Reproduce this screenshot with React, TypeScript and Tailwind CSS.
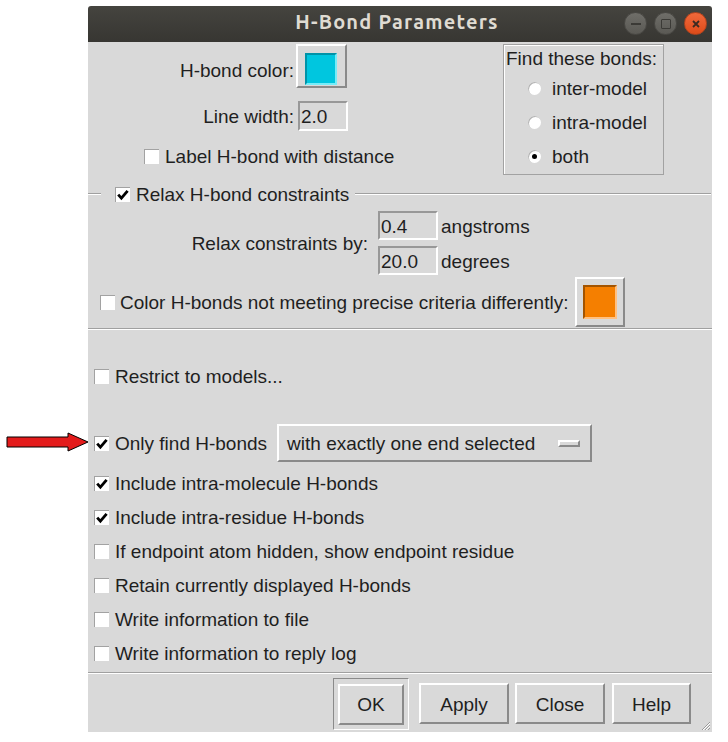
import React from "react";

const RAISED =
  "border-2 border-t-white border-l-white border-r-[#8a8a8a] border-b-[#8a8a8a]";
const SUNKEN =
  "border-2 border-t-[#989898] border-l-[#989898] border-r-white border-b-white";

function T({ children, className = "" }: { children: React.ReactNode; className?: string }) {
  return <span className={`pt-[2px] whitespace-nowrap ${className}`}>{children}</span>;
}

function Check({ checked }: { checked?: boolean }) {
  return (
    <span className="relative inline-block w-[15px] h-[15px] shrink-0 bg-white border-t border-l border-[#a2a2a2]">
      {checked && (
        <svg className="absolute left-0 top-0" width="14" height="14" viewBox="0 0 14 14">
          <path d="M2.2 6.6 L5.4 10.2 L11.6 2.8" fill="none" stroke="#000" strokeWidth="2.8" />
        </svg>
      )}
    </span>
  );
}

function Radio({ on }: { on?: boolean }) {
  return (
    <span className="w-[13px] h-[13px] shrink-0 rounded-full bg-white shadow-[inset_1px_1px_0_#b4b4b4] flex items-center justify-center">
      {on && <span className="w-[5px] h-[5px] rounded-full bg-black" />}
    </span>
  );
}

function Groove() {
  return <div className="h-[2px] border-t border-[#a0a0a0] bg-white" />;
}

function Row({ checked, children }: { checked?: boolean; children: React.ReactNode }) {
  return (
    <div className="h-[34px] flex items-center gap-[6px]">
      <Check checked={checked} />
      <T>{children}</T>
    </div>
  );
}

function Btn({ w, children }: { w: string; children: React.ReactNode }) {
  return (
    <div className={`${w} h-[41px] ${RAISED} bg-[#d9d9d9] flex items-center justify-center`}>
      <T>{children}</T>
    </div>
  );
}

export default function App() {
  return (
    <div className="relative w-[728px] h-[742px] bg-white font-['Liberation_Sans',Arial,sans-serif] text-[19px] leading-[22px] text-[#1f1f1f] overflow-hidden">
      {/* annotation arrow */}
      <svg className="absolute left-0 top-[430px]" width="92" height="26" viewBox="0 0 92 26">
        <polygon
          points="7,7 68,7 68,3 88,12 68,21 68,17 7,17"
          fill="#e31b1b"
          stroke="#000"
          strokeWidth="1"
        />
      </svg>

      <div className="ml-[88px] pt-[6px] w-[624px]">
        {/* title bar */}
        <div className="h-[36px] grid grid-cols-[1fr_auto_1fr] items-center bg-gradient-to-b from-[#45443f] to-[#373632] rounded-t-[3px]">
          <div />
          <div className="pb-[6px] mr-[6px] font-['Ubuntu','Open_Sans',sans-serif] font-bold text-[20px] leading-[27px] text-[#dfdbd2] tracking-[1.2px]">
            H-Bond Parameters
          </div>
          <div className="flex justify-end items-center gap-[7px] pr-[5px] pb-[1px]">
            <span className="w-[23px] h-[23px] rounded-full bg-gradient-to-b from-[#6f6e69] to-[#5a5954] border border-[#4a4945] flex items-center justify-center">
              <span className="w-[10px] h-[2px] bg-[#3b3a36]" />
            </span>
            <span className="w-[23px] h-[23px] rounded-full bg-gradient-to-b from-[#6f6e69] to-[#5a5954] border border-[#4a4945] flex items-center justify-center">
              <span className="w-[10px] h-[10px] border-[1.5px] border-[#3b3a36] rounded-[1px]" />
            </span>
            <span className="w-[23px] h-[23px] rounded-full bg-gradient-to-b from-[#f0683a] to-[#dd4b18] border border-[#b8441d] flex items-center justify-center">
              <svg width="10" height="10" viewBox="0 0 10 10">
                <path d="M2 2 L8 8 M8 2 L2 8" stroke="#3b2a22" strokeWidth="1.8" />
              </svg>
            </span>
          </div>
        </div>

        {/* body */}
        <div className="bg-[#d9d9d9] h-[690px] flex flex-col">
          {/* top section */}
          <div className="h-[142px] flex">
            <div className="w-[415px] flex flex-col pt-[2px]">
              <div className="h-[44px] flex">
                <div className="w-[206px] text-right pt-[16px]">H-bond color:</div>
                <div className={`ml-[2px] w-[51px] h-[44px] ${RAISED} pt-[7px] pl-[7px]`}>
                  <div className="w-[32px] h-[32px] bg-[#00c6df] border-2 border-t-[#0093a8] border-l-[#0093a8] border-r-[#76ecf8] border-b-[#76ecf8]" />
                </div>
              </div>
              <div className="mt-[13px] h-[30px] flex items-center">
                <div className="w-[206px] text-right flex justify-end">
                  <T>Line width:</T>
                </div>
                <div className={`ml-[4px] w-[50px] h-[30px] ${SUNKEN} flex items-center pl-[1px]`}>
                  <T>2.0</T>
                </div>
              </div>
              <div className="mt-[10px] h-[30px] flex items-center pl-[56px] gap-[6px]">
                <Check />
                <T>Label H-bond with distance</T>
              </div>
            </div>
            <div className="mt-[2px] w-[161px] h-[131px] border border-[#a2a2a2] shadow-[inset_1px_1px_0_#ffffff] flex flex-col">
              <div className="h-[26px] flex items-center pl-[2px]">
                <T>Find these bonds:</T>
              </div>
              {["inter-model", "intra-model", "both"].map((t, i) => (
                <div key={t} className="h-[34px] flex items-center pl-[24px] gap-[11px]">
                  <Radio on={i === 2} />
                  <T>{t}</T>
                </div>
              ))}
            </div>
          </div>

          {/* relax frame */}
          <div className="h-[20px] flex items-center">
            <div className="w-[13px]">
              <Groove />
            </div>
            <div className="w-[14px]" />
            <Check checked />
            <T className="ml-[6px]">Relax H-bond constraints</T>
            <div className="ml-[6px] flex-1 mr-[1px]">
              <Groove />
            </div>
          </div>
          <div className="mt-[7px] flex">
            <div className="w-[280px] flex items-center justify-end">
              <T>Relax constraints by:</T>
            </div>
            <div className="ml-[10px] flex flex-col gap-[6px]">
              <div className="h-[29px] flex items-center">
                <div className={`w-[60px] h-[29px] ${SUNKEN} flex items-center pl-[1px]`}>
                  <T>0.4</T>
                </div>
                <T className="ml-[3px]">angstroms</T>
              </div>
              <div className="h-[29px] flex items-center">
                <div className={`w-[60px] h-[29px] ${SUNKEN} flex items-center pl-[1px]`}>
                  <T>20.0</T>
                </div>
                <T className="ml-[3px]">degrees</T>
              </div>
            </div>
          </div>
          <div className="mt-[2px] h-[50px] flex items-center pl-[12px]">
            <Check />
            <T className="ml-[5px]">Color H-bonds not meeting precise criteria differently:</T>
            <div className={`ml-[7px] w-[50px] h-[50px] ${RAISED} pt-[6px] pl-[6px]`}>
              <div className="w-[34px] h-[34px] bg-[#f57f00] border-2 border-t-[#a35400] border-l-[#a35400] border-r-[#ffc081] border-b-[#ffc081]" />
            </div>
          </div>
          <div className="mt-[1px]">
            <Groove />
          </div>

          {/* lower section */}
          <div className="pl-[6px] flex flex-col">
            <div className="mt-[29px]">
              <Row>Restrict to models...</Row>
            </div>
            <div className="mt-[31px] h-[38px] flex items-center gap-[6px]">
              <Check checked />
              <T>Only find H-bonds</T>
              <div className={`ml-[4px] w-[315px] h-[38px] ${RAISED} flex items-center justify-between pl-[8px] pr-[10px]`}>
                <T>with exactly one end selected</T>
                <span className="w-[22px] h-[7px] border-[2px] border-t-white border-l-white border-r-[#8a8a8a] border-b-[#8a8a8a] bg-[#d9d9d9]" />
              </div>
            </div>
            <div className="mt-[4px] flex flex-col">
              <Row checked>Include intra-molecule H-bonds</Row>
              <Row checked>Include intra-residue H-bonds</Row>
              <Row>If endpoint atom hidden, show endpoint residue</Row>
              <Row>Retain currently displayed H-bonds</Row>
              <Row>Write information to file</Row>
              <Row>Write information to reply log</Row>
            </div>
          </div>
          <div className="mt-[2px]">
            <Groove />
          </div>

          {/* buttons */}
          <div className="relative flex-1 flex justify-end items-start pt-[4px] pr-[21px]">
            <div className="w-[76px] h-[52px] border border-t-[#8a8a8a] border-l-[#8a8a8a] border-r-white border-b-white flex items-center justify-center">
              <Btn w="w-[66px]">OK</Btn>
            </div>
            <div className="ml-[10px] mt-[5px]">
              <Btn w="w-[90px]">Apply</Btn>
            </div>
            <div className="ml-[6px] mt-[5px]">
              <Btn w="w-[90px]">Close</Btn>
            </div>
            <div className="ml-[7px] mt-[5px]">
              <Btn w="w-[79px]">Help</Btn>
            </div>
            <svg className="absolute right-[1px] bottom-[1px]" width="12" height="12" viewBox="0 0 12 12">
              <path d="M11 3 L3 11 M11 6 L6 11 M11 9 L9 11" stroke="#9a9a9a" strokeWidth="1" />
              <path d="M11 4 L4 11 M11 7 L7 11" stroke="#ffffff" strokeWidth="1" />
            </svg>
          </div>
        </div>
      </div>
    </div>
  );
}
